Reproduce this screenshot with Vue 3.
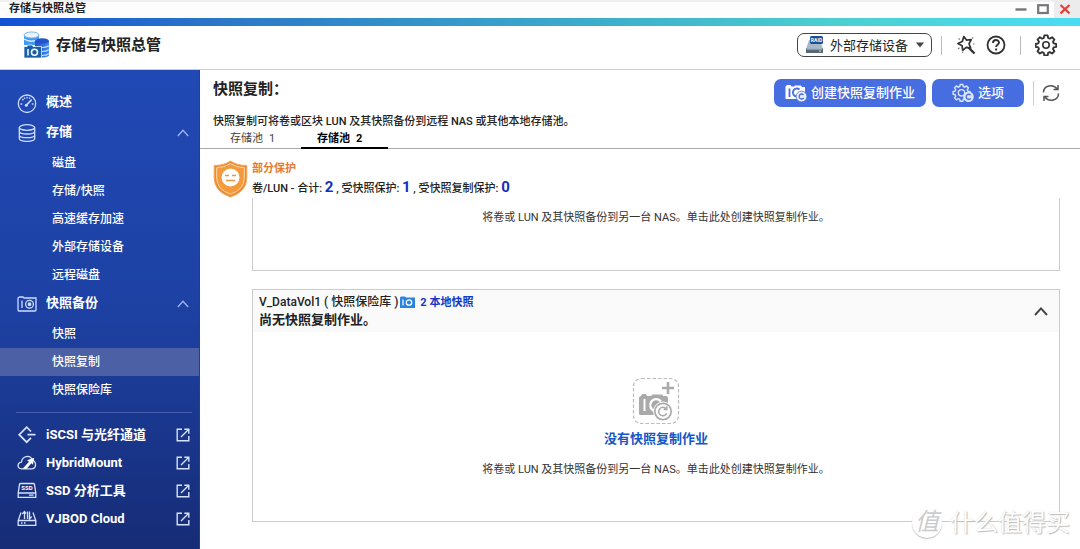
<script setup>
import { ref } from 'vue'

const storageItems = ['磁盘', '存储/快照', '高速缓存加速', '外部存储设备', '远程磁盘']
const backupItems = ['快照', '快照复制', '快照保险库']
const current = ref('快照复制')
const storageOpen = ref(true)
const backupOpen = ref(true)
const panelOpen = ref(true)
const pools = [1, 2]
const activePool = ref(2)
const device = ref('外部存储设备')
const tools = [
  { name: 'iSCSI 与光纤通道', icon: 'iscsi' },
  { name: 'HybridMount', icon: 'hybrid' },
  { name: 'SSD 分析工具', icon: 'ssd' },
  { name: 'VJBOD Cloud', icon: 'vjbod' },
]
</script>

<template>
  <div class="window">
    <div class="titlebar">
      <span class="window-title">存储与快照总管</span>
      <div class="window-controls">
        <button type="button" aria-label="最小化">
          <svg width="12" height="12" viewBox="0 0 12 12"><path d="M0.5 6.5h11" stroke="#74767a" stroke-width="2.4" /></svg>
        </button>
        <button type="button" aria-label="最大化">
          <svg width="12" height="12" viewBox="0 0 12 12"><rect x="1.2" y="2.2" width="9.6" height="7.8" fill="none" stroke="#74767a" stroke-width="2.2" /></svg>
        </button>
        <button type="button" class="close" aria-label="关闭">
          <svg width="12" height="12" viewBox="0 0 12 12"><path d="M1.5 2l9 8.4M10.5 2l-9 8.4" stroke="#e2423a" stroke-width="2.2" /></svg>
        </button>
      </div>
    </div>
    <div class="accent"></div>

    <header class="app-header">
      <svg class="logo" width="27" height="28" viewBox="0 0 27 28" aria-hidden="true">
        <defs>
          <linearGradient id="cyl" x1="0" x2="1"><stop offset="0" stop-color="#2050cc" /><stop offset="1" stop-color="#3f8cf0" /></linearGradient>
        </defs>
        <path d="M1 4v10h15V4z" fill="#3f9af5" />
        <path d="M1 8q7.500 4.500 15 0" fill="none" stroke="#d9ecff" stroke-width="1.300" />
        <ellipse cx="8.500" cy="4" rx="7.500" ry="3" fill="#eaf4ff" stroke="#7db4ee" stroke-width="1" />
        <path d="M12 10v15q7 3 14 0V10z" fill="url(#cyl)" />
        <ellipse cx="19" cy="10" rx="7" ry="2.800" fill="#2353c8" />
        <path d="M19 16.500q4 0 7-1.800M19 20.500q4 0 7-1.800M19 24.500q4 0 7-1.800" fill="none" stroke="#c7e0ff" stroke-width="1.200" />
        <path d="M1 15.500h3l1-1.500h4l1 1.500h8.500V27H1z" fill="#1b5fa9" stroke="#fff" stroke-width=".7" />
        <path d="M5 18v6.500" stroke="#fff" stroke-width="1.500" />
        <circle cx="11.500" cy="21.200" r="3" fill="none" stroke="#fff" stroke-width="1.500" />
      </svg>
      <h1>存储与快照总管</h1>
      <div class="header-tools">
        <label class="device">
          <svg width="19" height="18" viewBox="0 0 19 18" aria-hidden="true">
            <path d="M4 4h11l3 9H1z" fill="#a9b8c8" />
            <path d="M1 12.500h17V17H1z" fill="#566879" />
            <path d="M2 13h15" stroke="#dbe5ee" stroke-width=".8" />
            <path d="M14 15.200h2" stroke="#8bea73" stroke-width="1.200" />
            <rect x="5" y="0" width="13" height="8" rx="1.500" fill="#175199" />
            <text x="11.500" y="5.800" text-anchor="middle" class="tiny-label">RAID</text>
          </svg>
          <select v-model="device" aria-label="设备">
            <option>外部存储设备</option>
          </select>
          <svg class="caret" width="8" height="6" viewBox="0 0 8 6" aria-hidden="true"><path d="M0 .5h8L4 5.500z" fill="#444" /></svg>
        </label>
        <span class="divider"></span>
        <button type="button" class="icon-button wand" aria-label="向导">
          <svg width="20" height="20" viewBox="0 0 20 20" fill="none" stroke="#333">
            <path d="M7.800 1.500l2.700 3.600 4.700-.4-2.200 4.100 1.700 4.200-4.500-.7-3.500 3-.6-4.600-4.200-2.200 4.400-2z" stroke-width="1.700" stroke-linejoin="round" />
            <path d="M12.500 12.500l6 6" stroke-width="2.400" />
            <path d="M2.500 3.500l1.500 1M16 3.500l1.200-1M17 9h1.500M2 14l1.500-1.200M6.500 18l.6-1.200" stroke-width="1.100" stroke="#777" />
          </svg>
        </button>
        <button type="button" class="icon-button" aria-label="帮助">
          <svg width="20" height="20" viewBox="0 0 20 20" fill="none" stroke="#333">
            <circle cx="10" cy="10" r="8.500" stroke-width="1.800" />
            <path d="M7 8c0-4 6-3.700 6-.4 0 2.200-2.900 2.300-2.900 4.500" stroke-width="1.900" />
            <path d="M10.100 13.500v2" stroke-width="2" />
          </svg>
        </button>
        <span class="divider"></span>
        <button type="button" class="icon-button" aria-label="设置">
          <svg width="22" height="22" viewBox="0 0 22 22" fill="none" stroke="#333" stroke-width="1.900" stroke-linejoin="round">
            <path d="M9.300 1.200h3.400l.6 2.700 1.700.7 2.300-1.500 2.400 2.400-1.500 2.300.7 1.700 2.700.6v2.900l-2.700.6-.7 1.700 1.500 2.300-2.400 2.400-2.300-1.500-1.700.7-.6 2.700H9.300l-.6-2.700-1.700-.7-2.300 1.500-2.400-2.400 1.500-2.300-.7-1.700-2.700-.6v-2.900l2.700-.6.7-1.700-1.500-2.300 2.400-2.400L7 4.600l1.700-.7z" transform="translate(.3 .2) scale(.97)" />
            <circle cx="11" cy="11" r="3.200" stroke-width="1.600" />
          </svg>
        </button>
      </div>
    </header>

    <div class="workspace">
      <nav class="sidebar" aria-label="导航">
        <a href="#overview" class="nav-row">
          <svg width="20" height="20" viewBox="0 0 20 20" fill="none" stroke="#cddcff" stroke-width="1.300">
            <circle cx="10" cy="10.700" r="8.700" />
            <path d="M3.500 11h1.700M14.800 11h1.700M5.300 6l1.200 1.200M10 3.800v1.700M7.300 4.500l.5 1.300M12.700 4.500l-.5 1.300" />
            <path d="M9.500 12l5.200-5.500" stroke-width="1.700" /><circle cx="9.300" cy="12.200" r="1.500" fill="#cddcff" stroke="none" />
          </svg>
          <span>概述</span>
        </a>
        <button type="button" class="nav-row" :aria-expanded="storageOpen" @click="storageOpen = !storageOpen">
          <svg width="20" height="20" viewBox="0 0 20 20" fill="none" stroke="#cddcff" stroke-width="1.300">
            <ellipse cx="10" cy="4.500" rx="7.700" ry="2.800" />
            <path d="M2.300 4.500v11c0 3.700 15.400 3.700 15.400 0v-11M2.300 8.200c0 3.700 15.400 3.700 15.400 0M2.300 11.900c0 3.700 15.400 3.700 15.400 0" />
          </svg>
          <span>存储</span>
          <svg class="chevron" width="12" height="8" viewBox="0 0 12 8"><path d="M.8 7L6 1.200 11.200 7" fill="none" stroke="#9fb4ec" stroke-width="1.300" /></svg>
        </button>
        <ul v-if="storageOpen">
          <li v-for="item in storageItems" :key="item">
            <a href="#item" :class="{ current: current === item }" @click.prevent="current = item">{{ item }}</a>
          </li>
        </ul>
        <button type="button" class="nav-row" :aria-expanded="backupOpen" @click="backupOpen = !backupOpen">
          <svg width="20" height="20" viewBox="0 0 20 20" fill="none" stroke="#cddcff" stroke-width="1.300">
            <path d="M1 16V4l1.500-1H6l1 1h12v12q0 1-1 1H2q-1 0-1-1zM5 6.500v7.500" />
            <circle cx="12.500" cy="10.300" r="3.900" /><circle cx="12.500" cy="10.300" r="1.300" fill="#cddcff" />
          </svg>
          <span>快照备份</span>
          <svg class="chevron" width="12" height="8" viewBox="0 0 12 8"><path d="M.8 7L6 1.200 11.200 7" fill="none" stroke="#9fb4ec" stroke-width="1.300" /></svg>
        </button>
        <ul v-if="backupOpen">
          <li v-for="item in backupItems" :key="item">
            <a href="#item" :class="{ current: current === item }" @click.prevent="current = item">{{ item }}</a>
          </li>
        </ul>
        <div class="tools">
          <a v-for="tool in tools" :key="tool.name" href="#tool" class="nav-row tool">
            <svg v-if="tool.icon === 'iscsi'" width="20" height="20" viewBox="0 0 20 20" fill="none" stroke="#d6e2ff" stroke-width="1.700">
              <path d="M14 6.500L9.700 2.200 2.200 9.700l7.500 7.500L14 12.900M10.500 9.700H18.500" />
            </svg>
            <svg v-else-if="tool.icon === 'hybrid'" width="20" height="20" viewBox="0 0 20 20" fill="none" stroke="#d6e2ff" stroke-width="1.300">
              <path d="M4.500 15.800c-4.600 0-4.500-6-.1-6.600C5.300 2.500 13 1.500 15.500 7c4.700 2.700 3.500 8.800-.8 8.800H11z" />
              <path d="M5.500 15.800l6.500-7-2-1.500 7.200-2.500-1.300 7-1.500-1.500-4.700 5.500z" fill="#fff" stroke="none" />
            </svg>
            <svg v-else-if="tool.icon === 'ssd'" width="20" height="20" viewBox="0 0 20 20" fill="none" stroke="#d6e2ff" stroke-width="1.300">
              <path d="M1.200 12L2.500 3.500q.3-1 1.300-1h12.400q1 0 1.300 1l1.300 8.500v4.300H1.200zM1.200 12h17.600M12 14.200h4.500" />
              <text x="10" y="9.300" text-anchor="middle" class="tiny-label">SSD</text>
            </svg>
            <svg v-else width="20" height="20" viewBox="0 0 20 20" fill="none" stroke="#d6e2ff" stroke-width="1.300">
              <path d="M4 3.500L1.200 11.500v4.800h17.600v-4.800L16 3.500M1.200 11.500h17.600" />
              <path d="M7.500 10V2.500M5.300 5l2.200-2.500L9 4.500M12.500 2.500V10l2.200-2.500M10.500 2.500v7.500M4 14h1.500M7 14h1.500" />
            </svg>
            <span>{{ tool.name }}</span>
            <svg class="external" width="14" height="14" viewBox="0 0 14 14" fill="none" stroke="#d6e2ff" stroke-width="1.400">
              <path d="M6 1.200H1.200v11.600h11.600V8M5 9l7.500-7.500M8.300 1.200h4.500v4.500" />
            </svg>
          </a>
        </div>
      </nav>

      <main>
        <div class="page-head">
          <h2>快照复制：</h2>
          <div class="actions">
            <button type="button" class="primary create">
              <svg width="22" height="20" viewBox="0 0 22 20" fill="none">
                <path d="M.5 16V3.500L2 2h3.500l1 1.500H9l1-1h6l1 1.500h3V16z" fill="#fff" />
                <path d="M4.500 5.500v8.500" stroke="#466ee0" stroke-width="1.800" />
                <path d="M14.500 6.500a4 4 0 1 0-2.500 7" stroke="#466ee0" stroke-width="1.800" />
                <circle cx="16.500" cy="13.500" r="5.400" fill="#e8eeff" stroke="#466ee0" stroke-width=".8" />
                <path d="M18.500 11.800a2.500 2.500 0 1 0 .2 3.200" stroke="#466ee0" stroke-width="1.300" />
              </svg>
              <span>创建快照复制作业</span>
            </button>
            <button type="button" class="primary options">
              <svg width="22" height="20" viewBox="0 0 22 20" fill="none">
                <path d="M8.200 1.500h2.600l.5 2 1.400.6 1.800-1.100 1.900 1.900-1.100 1.800.6 1.400 2 .5v2.600l-2 .5-.6 1.400 1.100 1.800-1.900 1.900-1.800-1.100-1.400.6-.5 2H8.200l-.5-2-1.400-.6-1.800 1.100-1.900-1.900 1.100-1.800-.6-1.400-2-.5V8.600l2-.5.6-1.400-1.100-1.800L4.500 3l1.800 1.100 1.400-.6z" stroke="#dbe5ff" stroke-width="1.400" />
                <circle cx="9.500" cy="9.800" r="3.200" stroke="#dbe5ff" stroke-width="1.300" />
                <circle cx="16.500" cy="13.800" r="5.300" fill="#dbe5ff" />
                <path d="M18.500 12.100a2.500 2.500 0 1 0 .2 3.200" stroke="#466ee0" stroke-width="1.400" />
              </svg>
              <span>选项</span>
            </button>
            <span class="divider"></span>
            <button type="button" class="icon-button" aria-label="刷新">
              <svg width="18" height="20" viewBox="0 0 18 20" fill="none" stroke="#555" stroke-width="1.500">
                <path d="M1.500 9.500C1.500 2.700 10.500.3 15.300 6M16 2v4.500h-4.500M16.500 10.500c0 6.800-9 9.200-13.800 3.500M2 18v-4.500h4.500" />
              </svg>
            </button>
          </div>
        </div>
        <p class="description">快照复制可将卷或区块 LUN 及其快照备份到远程 NAS 或其他本地存储池。</p>
        <div class="tabs" role="tablist">
          <button v-for="pool in pools" :key="pool" type="button" role="tab" :aria-selected="activePool === pool" @click="activePool = pool">
            <span>存储池</span>
            <span>{{ pool }}</span>
          </button>
        </div>

        <section class="status">
          <svg width="35" height="38" viewBox="0 0 35 38" aria-hidden="true">
            <path d="M17.500 1Q24 5.500 33.800 5.500V18q0 13.500-16.300 19Q1.200 31.500 1.200 18V5.500Q11 5.500 17.500 1z" fill="#e98a35" stroke="#f4a95b" stroke-width="1" />
            <path d="M17.500 3.700Q24 7.500 31.300 7.700V18q0 11.500-13.800 16.200Q3.700 29.500 3.700 18V7.700Q11 7.500 17.500 3.700z" fill="#f49a3e" stroke="#ffd7a2" stroke-width="1" />
            <circle cx="17.500" cy="17.500" r="9" fill="#fff" />
            <path d="M12 15.500h4M19 15.500h4M13 20.500h9" stroke="#ef9440" stroke-width="1.500" />
          </svg>
          <div>
            <p class="partial">部分保护</p>
            <p class="counts">卷/LUN - 合计: <b>2</b> , 受快照保护: <b>1</b> , 受快照复制保护: <b>0</b></p>
          </div>
        </section>

        <div class="panels">
          <article class="panel scrolled">
            <p class="hint">将卷或 LUN 及其快照备份到另一台 NAS。单击此处创建快照复制作业。</p>
          </article>
          <article class="panel">
            <div class="panel-head">
              <div>
                <h3>V_DataVol1 ( 快照保险库 )
                  <svg width="15" height="12" viewBox="0 0 15 12" aria-hidden="true">
                    <path d="M0 1.500L1 .5h4l1 1h9V12H0z" fill="#2b83dc" />
                    <path d="M3 3.500v6" stroke="#fff" stroke-width="1.200" />
                    <circle cx="9" cy="6.500" r="2.700" fill="none" stroke="#fff" stroke-width="1.300" />
                  </svg>
                  <a href="#snapshots">2 本地快照</a>
                </h3>
                <p>尚无快照复制作业。</p>
              </div>
              <button type="button" class="icon-button" aria-label="折叠" :aria-expanded="panelOpen" @click="panelOpen = !panelOpen">
                <svg width="14" height="10" viewBox="0 0 14 10"><path d="M1 9l6-6.700L13 9" fill="none" stroke="#444" stroke-width="1.900" /></svg>
              </button>
            </div>
            <div v-if="panelOpen" class="empty">
              <svg width="48" height="48" viewBox="0 0 48 48" fill="none" aria-hidden="true">
                <rect x="1.500" y="1.500" width="45" height="45" rx="8" stroke="#bbb" stroke-width="1.200" stroke-dasharray="3.500 2" />
                <path d="M36 5v12M30 11h12" stroke="#aaa" stroke-width="2.600" />
                <path d="M7 37V21q0-2 2-2l1-2h4l1 2h4l1.500-1.500H30l1.500 1.500H34q2 0 2 2v17H8q-1 0-1-1z" fill="#aaa" />
                <path d="M12.500 22v12" stroke="#fff" stroke-width="2" />
                <path d="M29 24.500a6 6 0 1 0-6 9.500" stroke="#fff" stroke-width="2.300" />
                <circle cx="31" cy="34.500" r="9.500" fill="#aaa" stroke="#fff" stroke-width="1" />
                <circle cx="31" cy="34.500" r="7.300" fill="#fff" />
                <path d="M34.200 32a4.200 4.200 0 1 0 .5 4.200M34.800 29.300v3.200h-3.200" stroke="#aaa" stroke-width="1.500" />
              </svg>
              <a href="#create">没有快照复制作业</a>
              <p class="hint">将卷或 LUN 及其快照备份到另一台 NAS。单击此处创建快照复制作业。</p>
            </div>
          </article>
        </div>
      </main>
    </div>
    <div class="watermark"><span class="seal">值</span><span>什么值得买</span></div>
  </div>
</template>

<style>
body {
  margin: 0;
}
</style>

<style scoped>
.window {
  position: relative;
  display: flex;
  flex-direction: column;
  min-height: 100vh;
  background: #fff;
  color: #222;
  font-family: Roboto, "Noto Sans CJK SC", sans-serif;
  font-size: 11px;
  font-weight: 500;
}
.window * {
  box-sizing: border-box;
}
h1, h2, h3, p, ul {
  margin: 0;
  padding: 0;
  font-weight: 500;
}
button, select {
  margin: 0;
  padding: 0;
  border: 0;
  background: none;
  color: inherit;
  font: inherit;
}
button {
  cursor: pointer;
}
a {
  text-decoration: none;
}
svg {
  flex: none;
}
.titlebar {
  display: flex;
  justify-content: space-between;
  align-items: center;
  height: 18px;
  padding-left: 9px;
  background: linear-gradient(#f0f0f1 2px, #fdfdfd 2px);
}
.window-title {
  font-weight: 700;
  line-height: 16px;
}
.window-controls {
  display: flex;
  height: 18px;
}
.window-controls button {
  display: flex;
  align-items: center;
  justify-content: center;
  width: 22px;
}
.window-controls .close {
  background: #ececed;
  width: 26px;
  padding-right: 4px;
}
.accent {
  height: 8px;
  background: linear-gradient(90deg, #1251d5, #2b76c8 20%, #3aa5cb 50%, #4bd0d0 78%, #4bdcf5);
}
.app-header {
  display: flex;
  align-items: center;
  height: 44px;
  padding: 0 23px 5px;
  border-bottom: 1px solid #ccc;
}
h1 {
  margin-left: 6px;
  font-size: 15px;
  font-weight: 700;
  line-height: 20px;
}
.header-tools, .actions {
  display: flex;
  align-items: center;
  margin-left: auto;
}
.device {
  display: flex;
  align-items: center;
  height: 24px;
  padding: 0 7px;
  border: 1px solid #444;
  border-radius: 7px;
}
.device select {
  appearance: none;
  margin: 0 7px 0 6px;
  font-size: 13px;
  font-weight: 400;
  outline: none;
}
.tiny-label {
  fill: #fff;
  stroke: none;
  font: bold 6px Roboto, sans-serif;
}
.device .tiny-label {
  font-size: 5px;
}
.divider {
  width: 1px;
  height: 19px;
  margin: 0 14px 0 9px;
  background: #bbb;
}
.icon-button {
  display: flex;
  align-items: center;
}
.wand {
  margin-right: 10px;
}
.header-tools .divider:nth-of-type(2) {
  margin-left: 14px;
}
.workspace {
  display: flex;
  flex: 1;
}
.sidebar {
  flex: none;
  width: 200px;
  padding-top: 18px;
  border-right: 1px solid #1d3f9c;
  background: linear-gradient(#2149b5, #1d41a3 50%, #162c76);
  color: #fff;
}
.nav-row {
  display: flex;
  align-items: center;
  width: 100%;
  height: 30px;
  padding: 0 10px 0 17px;
  color: #fff;
  font-size: 13px;
  font-weight: 700;
  line-height: 18px;
  text-align: left;
}
.nav-row span {
  flex: 1;
  margin-left: 9px;
  padding-bottom: 2px;
}
ul {
  padding: 1px 0 0;
  list-style: none;
}
ul a {
  display: block;
  height: 28px;
  padding-left: 52px;
  color: #fff;
  font-size: 12px;
  line-height: 28px;
}
ul a.current {
  background: #4c60a6;
}
.tools {
  margin: 8px 7px 0 16px;
  padding-top: 8px;
  border-top: 1px solid #4560ac;
}
.nav-row.tool {
  height: 28px;
  padding: 0 0 0 1px;
}
.tool span {
  padding-bottom: 0;
}
.tool .external {
  margin-right: 2px;
}
main {
  display: flex;
  flex-direction: column;
  flex: 1;
  min-width: 0;
}
.page-head {
  display: flex;
  align-items: flex-start;
  height: 42px;
  padding: 9px 20px 0 13px;
}
h2 {
  font-size: 15px;
  font-weight: 700;
  line-height: 20px;
}
.primary {
  display: flex;
  align-items: center;
  justify-content: center;
  gap: 4px;
  height: 28px;
  border-radius: 7px;
  background: #466ee0;
  color: #fff;
  font-size: 13px;
  line-height: 18px;
}
.create {
  width: 152px;
}
.options {
  width: 92px;
  margin-left: 6px;
}
.actions .divider {
  height: 24px;
  margin: 0 8px 0 9px;
  background: #ccc;
}
.description {
  padding-left: 13px;
  line-height: 20px;
}
.tabs {
  display: flex;
  height: 17px;
  padding-left: 14px;
  border-bottom: 1px solid #aaa;
}
.tabs button {
  display: flex;
  gap: 6px;
  width: 87px;
  height: 17px;
  padding-left: 16px;
  border-bottom: 2px solid transparent;
  color: #444;
  font-weight: 400;
  line-height: 14px;
}
.tabs button[aria-selected="true"] {
  border-color: #000;
  color: #000;
  font-weight: 700;
}
.status {
  display: flex;
  gap: 4px;
  height: 49px;
  padding: 11px 0 0 13px;
}
.status p {
  line-height: 18px;
}
.status .partial {
  color: #e87a33;
  font-weight: 700;
}
.counts b {
  color: #1430c0;
  font-size: 15px;
  font-weight: 700;
}
.panels {
  padding: 0 20px 27px 52px;
}
.panel {
  border: 1px solid #ccc;
}
.panel + .panel {
  margin-top: 18px;
}
.scrolled {
  padding: 11px 0 43px;
  border-top: 0;
}
.hint {
  color: #333;
  font-weight: 400;
  line-height: 18px;
  text-align: center;
}
.panel-head {
  display: flex;
  align-items: center;
  justify-content: space-between;
  height: 42px;
  padding: 0 11px 0 6px;
  background: #fafafa;
}
h3 {
  display: flex;
  align-items: center;
  gap: 2px;
  font-size: 12px;
  line-height: 17px;
}
h3 a {
  margin-left: 3px;
  color: #1438c4;
  font-size: 11px;
  font-weight: 700;
}
.panel-head p {
  font-size: 13px;
  font-weight: 700;
  line-height: 18px;
}
.empty {
  display: flex;
  flex-direction: column;
  align-items: center;
  padding: 45px 0 42px;
}
.empty a {
  margin: 4px 0 13px;
  color: #1457c8;
  font-size: 13px;
  font-weight: 700;
  line-height: 19px;
}
.watermark {
  position: absolute;
  right: 10px;
  bottom: 10px;
  display: flex;
  align-items: center;
  gap: 8px;
  color: #fff;
  font-size: 24px;
  font-weight: 400;
  line-height: 32px;
  text-shadow: 1px 1px 1px #bbb, 0 0 1px #ccc;
  pointer-events: none;
}
.seal {
  width: 30px;
  height: 30px;
  border-radius: 50%;
  background: #fff;
  box-shadow: 0 1px 1px #bbb;
  color: #ccc;
  font-style: italic;
  line-height: 28px;
  text-align: center;
  text-shadow: none;
}
</style>
